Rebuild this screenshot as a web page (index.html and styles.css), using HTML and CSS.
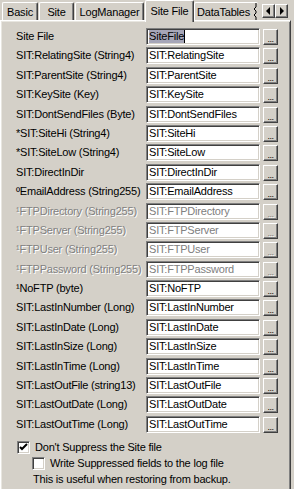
FILE: index.html
```html
<!DOCTYPE html>
<html>
<head>
<meta charset="utf-8">
<link rel="stylesheet" href="styles.css">
</head>
<body>
<div class="win">
  <div class="tabstrip">
    <div class="tab t-basic">Basic</div>
    <div class="tab t-site">Site</div>
    <div class="tab t-log">LogManager</div>
    <div class="tab sel t-sf">Site File</div>
    <div class="tab clip t-dt">DataTables<svg class="jag" width="5" height="18" viewBox="0 0 5 18"><polyline points="3,0 3,4 1,6 3,8 3,10 1,12 3,14 3,18" fill="none" stroke="#000" stroke-width="1"/></svg></div>
    <div class="spin">
      <div class="sbtn"><svg width="7" height="8" viewBox="0 0 7 8"><polygon points="5,0 5,8 1,4" fill="#000"/></svg></div>
      <div class="sbtn"><svg width="7" height="8" viewBox="0 0 7 8"><polygon points="2,0 2,8 6,4" fill="#000"/></svg></div>
    </div>
  </div>
  <div class="panel">
    <div class="rows">
      <div class="row"><span class="lbl">Site File</span><span class="fld"><span class="hl">SiteFile</span><span class="caret"></span></span><span class="btn">...</span></div>
      <div class="row"><span class="lbl">SIT:RelatingSite (String4)</span><span class="fld">SIT:RelatingSite</span><span class="btn">...</span></div>
      <div class="row"><span class="lbl">SIT:ParentSite (String4)</span><span class="fld">SIT:ParentSite</span><span class="btn">...</span></div>
      <div class="row"><span class="lbl">SIT:KeySite (Key)</span><span class="fld">SIT:KeySite</span><span class="btn">...</span></div>
      <div class="row"><span class="lbl">SIT:DontSendFiles (Byte)</span><span class="fld">SIT:DontSendFiles</span><span class="btn">...</span></div>
      <div class="row"><span class="lbl">*SIT:SiteHi (String4)</span><span class="fld">SIT:SiteHi</span><span class="btn">...</span></div>
      <div class="row"><span class="lbl">*SIT:SiteLow (String4)</span><span class="fld">SIT:SiteLow</span><span class="btn">...</span></div>
      <div class="row"><span class="lbl">SIT:DirectInDir</span><span class="fld">SIT:DirectInDir</span><span class="btn">...</span></div>
      <div class="row"><span class="lbl">ºEmailAddress (String255)</span><span class="fld">SIT:EmailAddress</span><span class="btn">...</span></div>
      <div class="row dis"><span class="lbl">¹FTPDirectory (String255)</span><span class="fld">SIT:FTPDirectory</span><span class="btn">...</span></div>
      <div class="row dis"><span class="lbl">¹FTPServer (String255)</span><span class="fld">SIT:FTPServer</span><span class="btn">...</span></div>
      <div class="row dis"><span class="lbl">¹FTPUser (String255)</span><span class="fld">SIT:FTPUser</span><span class="btn">...</span></div>
      <div class="row dis"><span class="lbl">¹FTPPassword (String255)</span><span class="fld">SIT:FTPPassword</span><span class="btn">...</span></div>
      <div class="row"><span class="lbl">¹NoFTP (byte)</span><span class="fld">SIT:NoFTP</span><span class="btn">...</span></div>
      <div class="row"><span class="lbl">SIT:LastInNumber (Long)</span><span class="fld">SIT:LastInNumber</span><span class="btn">...</span></div>
      <div class="row"><span class="lbl">SIT:LastInDate (Long)</span><span class="fld">SIT:LastInDate</span><span class="btn">...</span></div>
      <div class="row"><span class="lbl">SIT:LastInSize (Long)</span><span class="fld">SIT:LastInSize</span><span class="btn">...</span></div>
      <div class="row"><span class="lbl">SIT:LastInTime (Long)</span><span class="fld">SIT:LastInTime</span><span class="btn">...</span></div>
      <div class="row"><span class="lbl">SIT:LastOutFile (string13)</span><span class="fld">SIT:LastOutFile</span><span class="btn">...</span></div>
      <div class="row"><span class="lbl">SIT:LastOutDate (Long)</span><span class="fld">SIT:LastOutDate</span><span class="btn">...</span></div>
      <div class="row"><span class="lbl">SIT:LastOutTime (Long)</span><span class="fld">SIT:LastOutTime</span><span class="btn">...</span></div>
    </div>
    <div class="chk c1"><span class="box"><svg width="9" height="9" viewBox="0 0 9 9"><polyline points="1,4 3,6 8,1" fill="none" stroke="#000" stroke-width="2"/></svg></span><span>Don't Suppress the Site file</span></div>
    <div class="chk c2"><span class="box"></span><span>Write Suppressed fields to the log file</span></div>
    <div class="note">This is useful when restoring from backup.</div>
  </div>
</div>
</body>
</html>
```

FILE: styles.css
```css
html, body {
  margin: 0;
  padding: 0;
  background: #d4d0c8;
  font-family: "Liberation Sans", Arial, sans-serif;
  font-size: 11px;
  letter-spacing: -0.2px;
  color: #000;
  overflow: hidden;
}
.win {
  width: 294px;
  height: 489px;
  position: relative;
}
.tabstrip {
  height: 20px;
  display: flex;
  align-items: flex-start;
  position: relative;
  z-index: 2;
}
.tab {
  box-sizing: border-box;
  height: 18px;
  margin-top: 2px;
  border-left: 1px solid #fff;
  border-top: 1px solid #fff;
  border-right: 1px solid #404040;
  box-shadow: inset -1px 0 0 #808080;
  border-radius: 2px 2px 0 0;
  display: flex;
  align-items: center;
  justify-content: center;
  white-space: nowrap;
  padding-top: 1px;
}
.t-basic { margin-left: 2px; width: 36px; }
.t-site { margin-left: 1px; width: 35px; }
.t-log { margin-left: 1px; width: 69px; }
.t-sf { margin-left: 1px; width: 49px; }
.t-dt { margin-left: 0; width: 64px; }
.tab.sel {
  margin-top: 0;
  height: 22px;
  background: #d4d0c8;
  padding-bottom: 3px;
}
.tab.clip {
  border-right: none;
  box-shadow: none;
  justify-content: flex-start;
  padding-left: 2px;
  overflow: hidden;
  position: relative;
}
.jag {
  position: absolute;
  right: 0;
  top: 0;
}
.spin {
  display: flex;
  margin-left: 4px;
  margin-top: 4px;
}
.sbtn {
  box-sizing: border-box;
  width: 13px;
  height: 14px;
  border: 1px solid;
  border-color: #fff #404040 #404040 #fff;
  box-shadow: inset -1px -1px 0 #808080;
  display: flex;
  align-items: center;
  justify-content: center;
}
.panel {
  box-sizing: border-box;
  width: 291px;
  height: 480px;
  border-top: 1px solid #fff;
  border-left: 1px solid #fff;
  border-right: 1px solid #404040;
  box-shadow: inset 1px 1px 0 #e8e6e0, inset -1px 0 0 #808080;
  padding: 7px 0 0 15px;
  position: relative;
  z-index: 1;
}
.rows {
  display: flex;
  flex-direction: column;
}
.row {
  height: 19.4px;
  display: flex;
  align-items: flex-start;
}
.lbl {
  width: 130px;
  white-space: nowrap;
  line-height: 17px;
}
.fld {
  box-sizing: border-box;
  width: 114px;
  height: 17px;
  background: #fff;
  border: 1px solid;
  border-color: #808080 #fff #fff #808080;
  box-shadow: inset 1px 1px 0 #404040, inset -1px -1px 0 #d4d0c8;
  padding-left: 2px;
  line-height: 15px;
  white-space: nowrap;
  overflow: hidden;
  display: flex;
  align-items: center;
}
.hl {
  background: #a6a6b8;
  line-height: 13px;
}
.caret {
  width: 1px;
  height: 13px;
  background: #000;
}
.btn {
  box-sizing: border-box;
  width: 15px;
  height: 16px;
  margin-left: 3px;
  margin-top: 1px;
  border: 1px solid;
  border-color: #fff #404040 #404040 #fff;
  box-shadow: inset -1px -1px 0 #808080;
  font-size: 9px;
  line-height: 18px;
  text-align: center;
  letter-spacing: -0.5px;
}
.dis .lbl, .dis .btn {
  color: #808080;
  text-shadow: 1px 1px 0 #fff;
}
.dis .fld {
  color: #808080;
}
.chk {
  display: flex;
  align-items: center;
  height: 16px;
  white-space: nowrap;
}
.c1 { margin-top: 4px; margin-left: 1px; }
.c2 { margin-left: 16px; }
.box {
  box-sizing: border-box;
  width: 13px;
  height: 13px;
  background: #fff;
  border: 1px solid;
  border-color: #808080 #fff #fff #808080;
  box-shadow: inset 1px 1px 0 #404040, inset -1px -1px 0 #d4d0c8;
  margin-right: 5px;
  display: flex;
  align-items: center;
  justify-content: center;
}
.note {
  margin-left: 17px;
  line-height: 17px;
}
```
